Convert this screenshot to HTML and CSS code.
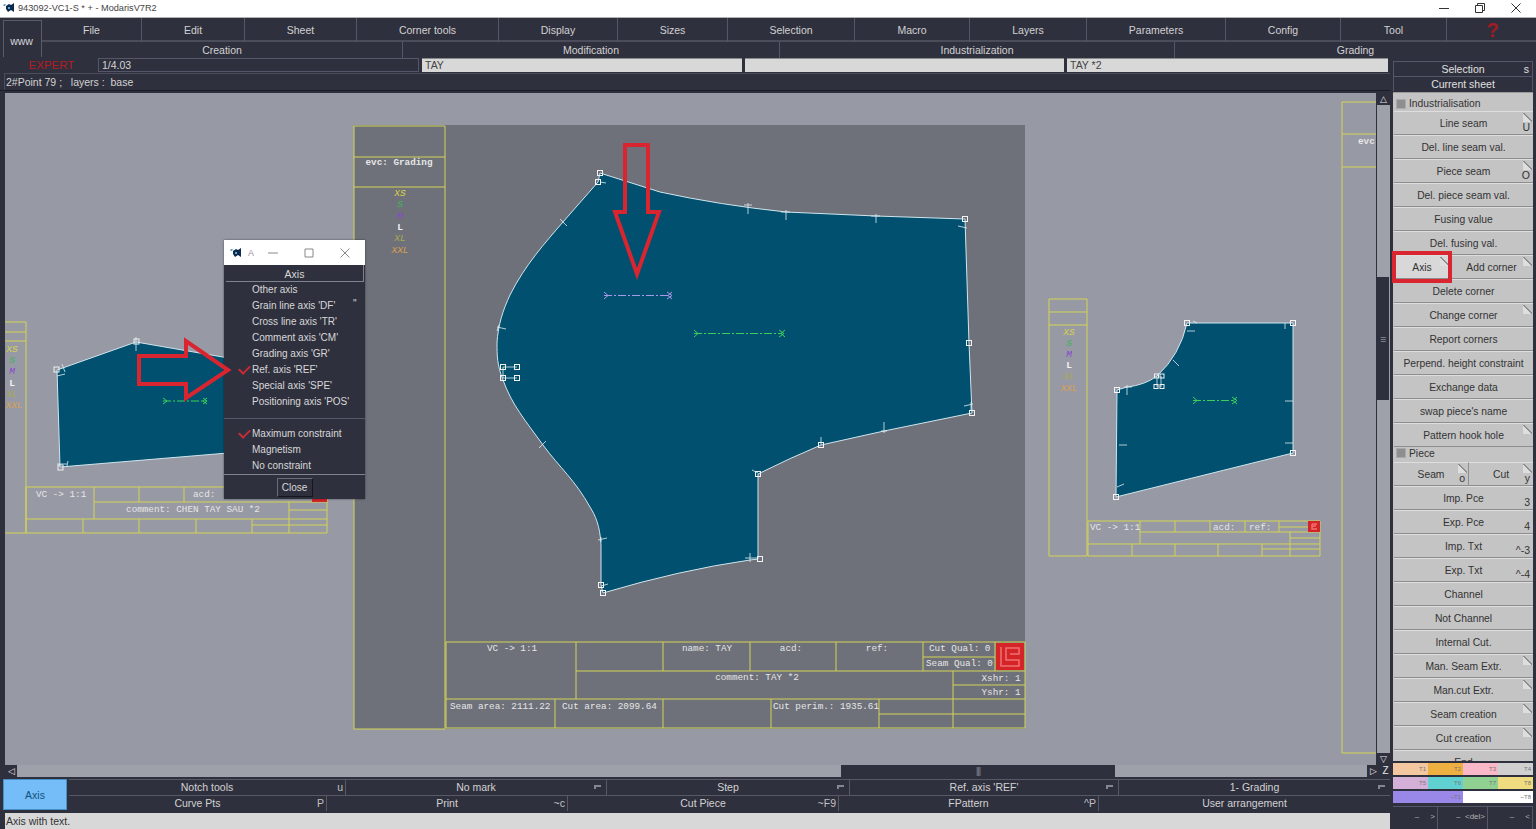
FILE: index.html
```html
<!DOCTYPE html>
<html lang="en">
<head>
<meta charset="utf-8">
<title>Modaris V7R2</title>
<link rel="stylesheet" href="styles.css">
</head>
<body>
<header class="titlebar">
  <svg class="app-icon" viewBox="0 0 12 10"><path d="M0 2l2-1 1 1-2 1z" fill="#3a7fb0"/><path d="M3 3l3-2 2 1 3-2v9l-3-2-3 2-2-3z" fill="#0e2a4a"/><path d="M5 4h2v2H5z" fill="#5aa8d8"/></svg>
  <span class="title-text">943092-VC1-S * + - ModarisV7R2</span>
  <div class="win-controls">
    <svg viewBox="0 0 10 10"><path d="M0 5.5h10" stroke="#333" fill="none"/></svg>
    <svg viewBox="0 0 10 10"><path d="M.5 2.5h7v7h-7zM2.5 2.5v-2h7v7h-2" stroke="#333" fill="none"/></svg>
    <svg viewBox="0 0 10 10"><path d="M.5.5l9 9M9.5.5l-9 9" stroke="#333" fill="none"/></svg>
  </div>
</header>

<section class="menus">
  <div class="www">www</div>
  <nav class="menu-a">
    <div>File</div><div>Edit</div><div>Sheet</div><div>Corner tools</div><div>Display</div><div>Sizes</div><div>Selection</div><div>Macro</div><div>Layers</div><div>Parameters</div><div>Config</div><div>Tool</div><div class="help">?</div>
  </nav>
  <nav class="menu-b">
    <div>Creation</div><div>Modification</div><div>Industrialization</div><div>Grading</div>
  </nav>
</section>

<main class="app">
  <div class="left">
    <div class="info">
      <div class="expert">EXPERT</div>
      <div class="field dark">1/4.03</div>
      <div class="field">TAY</div>
      <div class="field"></div>
      <div class="field">TAY *2</div>
    </div>
    <div class="status">2#Point 79 ;&nbsp;&nbsp; layers :&nbsp; base</div>
    <div class="work">
      <div class="canvas">
        <svg class="sheet" viewBox="5 93 1372 672" width="1372" height="672">
          <rect class="s-bg" x="354" y="125" width="671" height="604"/>

          <!-- far right sheet edge -->
          <path class="y" d="M1377 102H1342V753H1377M1342 134H1377M1342 167H1377"/>
          <text class="m b" x="1358" y="144">evc</text>

          <!-- left piece -->
          <path class="y" d="M5 322H26V533H5M5 332H26M5 341H26"/>
          <g class="sizes" text-anchor="middle">
            <text class="c1" x="12" y="352">XS</text><text class="c2" x="12" y="363">S</text><text class="c3" x="12" y="374">M</text><text class="c4" x="12" y="386">L</text><text class="c5" x="12" y="397">XL</text><text class="c6" x="14" y="408">XXL</text>
          </g>
          <path class="pc" d="M57 370L136 342L240 360V452L60 467Z"/>
          <path class="tk" d="M57 376l8-2M62 364l3 8M136 337v14M68 461l-1 5M57 464h10"/>
          <rect class="cn" x="54" y="367" width="5" height="5"/><rect class="cn" x="134" y="339" width="5" height="5"/><rect class="cn" x="58" y="465" width="5" height="5"/>
          <path class="ax-g" d="M163 401H206"/>
          <path class="ax-end-g" d="M163 398l4 3-4 3M203 398l4 3-4 3M207 398l-4 3 4 3"/>
          <path class="y" d="M26 487H327V533H26ZM94 487V519M139 487V502M184 487V502M94 502H327M26 519H327M83 519V533M139 519V533M196 519V533M252 519V533M289 502V533M289 510H327M252 525H327"/>
          <rect class="logo" x="312" y="497" width="15" height="5"/>
          <text class="m" x="36" y="497">VC -&gt; 1:1</text>
          <text class="m" x="193" y="497">acd:</text>
          <text class="m" x="193" y="512" text-anchor="middle">comment: CHEN TAY SAU *2</text>

          <!-- main sheet -->
          <path class="y" d="M354 126H445V729H354ZM354 157H445M354 187H445"/>
          <text class="m b" x="399" y="165" text-anchor="middle">evc: Grading</text>
          <g class="sizes" text-anchor="middle">
            <text class="c1" x="400" y="196">XS</text><text class="c2" x="400" y="207">S</text><text class="c3" x="400" y="219">M</text><text class="c4" x="400" y="230">L</text><text class="c5" x="400" y="241">XL</text><text class="c6" x="400" y="253">XXL</text>
          </g>
          <path class="pc" d="M600 173L660 192Q720 205 786 212L876 216L965 219L969 343L972 413L884 431L821 445Q790 458 758 474V559L750 560Q680 570 603 593L601 585V545C600 525 595 515 590 507C575 480 560 468 543 445C525 420 512 405 503 380C497 365 497 355 497 343C498 325 503 310 510 295C525 265 545 243 563 222L598 182Z"/>
          <path class="tk" d="M560 219l7 7M748 203v11M744 205h8M786 210v10M781 212h9M876 214v9M871 216h9M958 226l9 2M497 327l9 2M499 325l-2 6M546 441l-7 7M598 540l9-2M601 537v5M884 422v11M881 431h6M821 437v8M752 470l6 3M750 553v9M745 558h12M964 406l9-2M971 402v8M601 586l7-2M600 182l6 1"/>
          <path class="tk" d="M503 367H517M503 378H517M503 367V378"/>
          <rect class="cn" x="597.500" y="170.500" width="5" height="5"/><rect class="cn" x="595.500" y="179.500" width="5" height="5"/><rect class="cn" x="962.500" y="216.500" width="5" height="5"/><rect class="cn" x="966.500" y="340.500" width="5" height="5"/><rect class="cn" x="969.500" y="410.500" width="5" height="5"/><rect class="cn" x="818.500" y="442.500" width="5" height="5"/><rect class="cn" x="755.500" y="471.500" width="5" height="5"/><rect class="cn" x="757.500" y="556.500" width="5" height="5"/><rect class="cn" x="598.500" y="582.500" width="5" height="5"/><rect class="cn" x="600.500" y="590.500" width="5" height="5"/><rect class="cn" x="500.500" y="364.500" width="5" height="5"/><rect class="cn" x="514.500" y="364.500" width="5" height="5"/><rect class="cn" x="500.500" y="375.500" width="5" height="5"/><rect class="cn" x="514.500" y="375.500" width="5" height="5"/>
          <path class="ax-p" d="M604 295.500H670"/>
          <path class="ax-end-p" d="M604 292l4 3.500-4 3.500M667 292l5 3.500-5 3.500M672 292l-4 3.500 4 3.500"/>
          <path class="ax-g" d="M694 333.500H782"/>
          <path class="ax-end-g" d="M694 330l4 3.500-4 3.500M779 330l5 3.500-5 3.500M785 330l-4 3.500 4 3.500"/>

          <path class="y" d="M446 642H1025V728H446ZM576 642V699M663 642V671M750 642V671M836 642V671M923 642V671M995 642V671M923 657H995M576 671H1025M446 699H1025M953 671V728M953 685H1025M879 714H1025M555 699V728M663 699V728M771 699V728M879 699V728"/>
          <rect class="logo" x="996" y="643" width="28" height="27"/>
          <path class="logo-l" d="M1001 647V666H1019V660H1006V648H1019V654H1010"/>
          <text class="m" x="512" y="651" text-anchor="middle">VC -&gt; 1:1</text>
          <text class="m" x="707" y="651" text-anchor="middle">name: TAY</text>
          <text class="m" x="791" y="651" text-anchor="middle">acd:</text>
          <text class="m" x="877" y="651" text-anchor="middle">ref:</text>
          <text class="m" x="929" y="651">Cut Qual: 0</text>
          <text class="m" x="926" y="666">Seam Qual: 0</text>
          <text class="m" x="757" y="680" text-anchor="middle">comment: TAY *2</text>
          <text class="m" x="1001" y="681" text-anchor="middle">Xshr: 1</text>
          <text class="m" x="1001" y="695" text-anchor="middle">Yshr: 1</text>
          <text class="m" x="450" y="709">Seam area: 2111.22</text>
          <text class="m" x="562" y="709">Cut area: 2099.64</text>
          <text class="m" x="773" y="709">Cut perim.: 1935.61</text>

          <!-- right piece -->
          <path class="y" d="M1049 299H1087V556H1049ZM1049 312H1087M1049 325H1087"/>
          <g class="sizes" text-anchor="middle">
            <text class="c1" x="1069" y="335">XS</text><text class="c2" x="1069" y="346">S</text><text class="c3" x="1069" y="357">M</text><text class="c4" x="1069" y="368">L</text><text class="c5" x="1069" y="379">XL</text><text class="c6" x="1069" y="391">XXL</text>
          </g>
          <path class="pc" d="M1117 390L1127 387Q1145 385 1157 376Q1180 355 1187 323H1293V453L1116 497Z"/>
          <path class="tk" d="M1127 385v10M1124 387h8M1187 331h8M1197 323l-4-2M1173 360l6 6M1285 323v6M1119 445h8M1293 401h-8M1293 443h-8M1117 487l7-3"/>
          <path class="tk" d="M1157 376V387M1161 376V387"/>
          <rect class="cn" x="1114.500" y="387.500" width="5" height="5"/><rect class="cn" x="1184.500" y="320.500" width="5" height="5"/><rect class="cn" x="1290.500" y="320.500" width="5" height="5"/><rect class="cn" x="1290.500" y="450.500" width="5" height="5"/><rect class="cn" x="1113.500" y="494.500" width="5" height="5"/><rect class="cn" x="1154.500" y="374" width="4" height="4"/><rect class="cn" x="1160" y="374" width="4" height="4"/><rect class="cn" x="1154" y="384.500" width="4" height="4"/><rect class="cn" x="1160" y="384.500" width="4" height="4"/>
          <path class="ax-g" d="M1193 400.500H1235"/>
          <path class="ax-end-g" d="M1193 397l4 3.500-4 3.500M1232 397l5 3.500-5 3.500M1237 397l-4 3.500 4 3.500"/>
          <path class="y" d="M1088 521H1320V556H1088ZM1140 521V544M1175 521V532M1210 521V532M1245 521V532M1279 521V532M1140 532H1320M1088 544H1320M1132 544V556M1175 544V556M1218 544V556M1262 544V556M1290 532V556M1279 527H1320M1290 538H1320M1262 549H1320"/>
          <rect class="logo" x="1308" y="521" width="12" height="11"/>
          <path class="logo-l" d="M1312 524V529H1317M1312 526H1316M1312 524H1317"/>
          <text class="m" x="1090" y="530">VC -&gt; 1:1</text>
          <text class="m" x="1213" y="530">acd:</text>
          <text class="m" x="1249" y="530">ref:</text>
        </svg>
      </div>
      <div class="vscroll">
        <div class="sb-btn">△</div>
        <div class="track v"><div class="thumb v">≡</div></div>
        <div class="sb-btn">▽</div>
      </div>
    </div>
    <div class="hscroll">
      <div class="sb-btn">◁</div>
      <div class="track h"><div class="thumb h">|||</div></div>
      <div class="sb-btn">▷</div>
      <div class="sb-z">Z</div>
    </div>
    <div class="tools">
      <div class="axis-main">Axis</div>
      <div class="tool-rows">
        <div class="tool-row a">
          <div>Notch tools<b>u</b></div><div>No mark<i></i></div><div>Step<i></i></div><div>Ref. axis 'REF'<i></i></div><div>1- Grading<i></i></div>
        </div>
        <div class="tool-row c">
          <div>Curve Pts<b>P</b></div><div>Print<b>~c</b></div><div>Cut Piece<b>~F9</b></div><div>FPattern<b>^P</b></div><div>User arrangement</div>
        </div>
      </div>
    </div>
    <div class="hint">Axis with text.</div>
  </div>

  <aside class="side">
    <div class="side-h">Selection<b>s</b></div>
    <div class="side-h">Current sheet</div>
    <div class="panel">
      <div class="group"><span class="check"></span>Industrialisation</div>
      <div class="btn fold">Line seam<b>U</b></div>
      <div class="btn">Del. line seam val.</div>
      <div class="btn fold">Piece seam<b>O</b></div>
      <div class="btn">Del. piece seam val.</div>
      <div class="btn">Fusing value</div>
      <div class="btn">Del. fusing val.</div>
      <div class="pair axis-pair"><div class="btn fold on">Axis</div><div class="btn fold">Add corner</div></div>
      <div class="btn">Delete corner</div>
      <div class="btn fold">Change corner</div>
      <div class="btn">Report corners</div>
      <div class="btn">Perpend. height constraint</div>
      <div class="btn">Exchange data</div>
      <div class="btn">swap piece's name</div>
      <div class="btn fold">Pattern hook hole</div>
      <div class="group second"><span class="check"></span>Piece</div>
      <div class="pair seam-pair"><div class="btn fold">Seam<b>o</b></div><div class="btn fold">Cut<b>y</b></div></div>
      <div class="btn">Imp. Pce<b>3</b></div>
      <div class="btn">Exp. Pce<b>4</b></div>
      <div class="btn">Imp. Txt<b>^-3</b></div>
      <div class="btn">Exp. Txt<b>^-4</b></div>
      <div class="btn">Channel</div>
      <div class="btn">Not Channel</div>
      <div class="btn">Internal Cut.</div>
      <div class="btn fold">Man. Seam Extr.</div>
      <div class="btn fold">Man.cut Extr.</div>
      <div class="btn fold">Seam creation</div>
      <div class="btn fold">Cut creation</div>
      <div class="btn">End</div>
    </div>
    <div class="swatches">
      <div class="t1">T1</div><div class="t2">T2</div><div class="t3">T3</div><div class="t4">T4</div>
    </div>
    <div class="swatches">
      <div class="t5">T5</div><div class="t6">T6</div><div class="t7">T7</div><div class="t8">T8</div>
    </div>
    <div class="swatches two">
      <div class="t9">~T1</div><div class="t10">~T8</div>
    </div>
    <div class="keys">
      <div>–&nbsp;&nbsp;&nbsp;&nbsp;&nbsp;&gt;</div><div>–&nbsp;&nbsp;&lt;del&gt;</div><div>–&nbsp;&nbsp;&nbsp;&nbsp;&nbsp;&lt;</div>
    </div>
  </aside>
</main>

<div class="popup">
  <div class="pop-title">
    <svg class="app-icon" viewBox="0 0 12 10"><path d="M0 2l2-1 1 1-2 1z" fill="#3a7fb0"/><path d="M3 3l3-2 2 1 3-2v9l-3-2-3 2-2-3z" fill="#0e2a4a"/><path d="M5 4h2v2H5z" fill="#5aa8d8"/></svg>
    <span class="pop-a">A</span>
    <svg class="pop-c" viewBox="0 0 10 10"><path d="M0 5h10" stroke="#888" fill="none"/></svg>
    <svg class="pop-c" viewBox="0 0 10 10"><path d="M1 1h8v8H1z" stroke="#888" fill="none"/></svg>
    <svg class="pop-c" viewBox="0 0 10 10"><path d="M.5.5l9 9M9.5.5l-9 9" stroke="#888" fill="none"/></svg>
  </div>
  <div class="pop-head">Axis</div>
  <div class="pop-list">
    <div class="pop-item">Other axis</div>
    <div class="pop-item">Grain line axis 'DF'<b>"</b></div>
    <div class="pop-item">Cross line axis 'TR'</div>
    <div class="pop-item">Comment axis 'CM'</div>
    <div class="pop-item">Grading axis 'GR'</div>
    <div class="pop-item chk">Ref. axis 'REF'</div>
    <div class="pop-item">Special axis 'SPE'</div>
    <div class="pop-item">Positioning axis 'POS'</div>
  </div>
  <div class="pop-list sep">
    <div class="pop-item chk">Maximum constraint</div>
    <div class="pop-item">Magnetism</div>
    <div class="pop-item">No constraint</div>
  </div>
  <div class="pop-foot"><div class="pop-close">Close</div></div>
</div>

<svg class="marks" viewBox="0 0 1536 829" width="1536" height="829">
  <path d="M625 145H648V212H659L637 274L615 212H625Z"/>
  <path d="M139 356H186V341L228 370L186 398V384H139Z"/>
  <rect x="1394" y="253" width="56" height="28"/>
</svg>
</body>
</html>
```

FILE: styles.css
```css
* { box-sizing: border-box; }
html, body { margin: 0; height: 829px; overflow: hidden; }
body {
  position: relative;
  width: 1536px;
  background: #2f303e;
  color: #d2d2d2;
  font: 10.5px "Liberation Sans", Arial, sans-serif;
  display: flex;
  flex-direction: column;
}
b, i { font-weight: normal; font-style: normal; }

/* title bar */
.titlebar {
  height: 18px;
  background: #fff;
  color: #444;
  display: flex;
  align-items: center;
  padding: 0 0 1px 3px;
  flex: none;
  border-bottom: 1px solid #b0b0b0;
  font-size: 9.2px;
}
.app-icon { width: 12px; height: 10px; flex: none; }
.title-text { margin-left: 3px; }
.win-controls { margin-left: auto; display: flex; gap: 26px; padding-right: 15px; }
.win-controls svg { width: 10px; height: 10px; }

/* menus */
.menus {
  flex: none;
  height: 39px;
  display: grid;
  grid-template-columns: 3px 39px 1fr;
  grid-template-rows: 24px 15px;
  background: #2f303e;
}
.www {
  grid-column: 2;
  grid-row: 1 / 3;
  margin-top: 2px;
  border: 1px solid #5a5b68;
  border-bottom: 0;
  display: flex;
  align-items: center;
  justify-content: center;
  padding: 3px 2px 0 0;
  color: #d8d8d8;
}
.menu-a, .menu-b { grid-column: 3; display: grid; text-align: center; }
.menu-a {
  grid-row: 1;
  grid-template-columns: 100px 103px 112px 142px 119px 110px 127px 115px 117px 139px 115px 106px 1fr;
  border-bottom: 2px solid #4c4d5a;
}
.menu-a > div { border-right: 1px solid #55566a; line-height: 24px; }
.menu-a > div:last-child { border-right: 0; }
.help { color: #a01c22; font: bold 20px/24px "Liberation Sans", sans-serif; padding-left: 2px; }
.menu-b { grid-row: 2; grid-template-columns: 361px 377px 395px 1fr; }
.menu-b > div { border-right: 1px solid #55566a; line-height: 16px; }
.menu-b > div:last-child { border-right: 0; }

/* application body */
.app { flex: 1; display: grid; grid-template-columns: 1390px 146px; min-height: 0; }
.left { display: flex; flex-direction: column; min-width: 0; }
.info {
  height: 16px;
  flex: none;
  display: grid;
  grid-template-columns: 95px 321px 320px 319px 321px;
  gap: 3px;
  padding-top: 1px;
}
.expert { color: #b51c22; text-align: center; padding-left: 8px; line-height: 15px; font-size: 11.5px; }
.field {
  height: 14px;
  background: #d8d8d8;
  color: #444;
  padding-left: 3px;
  line-height: 13px;
  border-top: 1px solid #8a8a8a;
}
.field.dark {
  background: #2f303e;
  color: #d6d6d6;
  border: 1px solid #55566a;
}
.status {
  height: 17px;
  flex: none;
  margin: 0 0 0 4px;
  padding-left: 1px;
  line-height: 16px;
  border-top: 1px solid #4c4d5a;
  border-left: 1px solid #4c4d5a;
}
.work { flex: none; height: 675px; display: flex; padding-left: 5px; padding-top: 2px; border-top: 1px solid #1c1c26; }
.canvas { width: 1372px; height: 672px; background: #9799a4; overflow: hidden; }
.sheet { display: block; }
.s-bg { fill: #6e717a; }
.y { fill: none; stroke: #d4d455; stroke-width: 1; }
.pc { fill: #02506f; stroke: #cfe6ee; stroke-width: 1; }
.tk { fill: none; stroke: #dfeef2; stroke-width: .8; }
.cn { fill: none; stroke: #f2f2f2; stroke-width: 1; }
.ax-g { fill: none; stroke: #38d05a; stroke-width: 1; stroke-dasharray: 8 2 2 2; }
.ax-end-g { fill: none; stroke: #38d05a; stroke-width: 1; }
.ax-p { fill: none; stroke: #a99ae8; stroke-width: 1; stroke-dasharray: 8 2 2 2; }
.ax-end-p { fill: none; stroke: #a99ae8; stroke-width: 1; }
.logo { fill: #d52428; }
.logo-l { fill: none; stroke: #f07070; stroke-width: 1.5; }
.m { font: 9.3px "Liberation Mono", monospace; fill: #e6e6e6; }
.m.b { font-weight: bold; }
.sizes text { font: italic 9.5px "Liberation Mono", monospace; }
.c1 { fill: #d6d24e; }
.c2 { fill: #42b45a; }
.c3 { fill: #8a46d0; }
.sizes .c4 { fill: #f2f2f2; font-style: normal; font-weight: bold; }
.c5 { fill: #a8ac50; }
.c6 { fill: #dca050; }

/* scrollbars */
.vscroll { width: 13px; margin-left: 1px; display: flex; flex-direction: column; background: #2f303e; }
.sb-btn { width: 12px; height: 12px; color: #e8e8e8; font-size: 9px; line-height: 12px; text-align: center; flex: none; background: #2f303e; }
.track { background: #9ea0aa; flex: 1; display: flex; }
.track.v { flex-direction: column; padding-top: 172px; padding-right: 1px; }
.thumb { background: #2f303e; color: #8c8e9a; display: flex; align-items: center; justify-content: center; }
.thumb.v { height: 123px; }
.hscroll { height: 12px; flex: none; display: flex; padding: 0 0 0 5px; align-items: stretch; }
.track.h { width: 1350px; flex: none; padding-left: 824px; }
.thumb.h { width: 274px; font-size: 9px; letter-spacing: -1px; }
.sb-z { width: 12px; margin-left: 2px; text-align: center; color: #e8e8e8; font-size: 10px; line-height: 12px; }

/* bottom tools */
.tools { height: 33px; flex: none; display: flex; padding: 2px 0 0 3px; gap: 2px; }
.axis-main {
  width: 64px;
  height: 31px;
  background: #74bdf8;
  color: #14507c;
  display: flex;
  align-items: center;
  justify-content: center;
  border: 1px solid #4a90c8;
}
.tool-rows { flex: 1; display: flex; flex-direction: column; }
.tool-row { height: 16px; display: grid; text-align: center; line-height: 15px; border-top: 1px solid #585966; }
.tool-row.a { grid-template-columns: 277px 261px 243px 269px 1fr; }
.tool-row.c { grid-template-columns: 258px 241px 271px 260px 1fr; }
.tool-row > div { position: relative; border-right: 1px solid #585966; }
.tool-row > div:last-child { border-right: 0; }
.tool-row b { position: absolute; right: 2px; top: 0; color: #c0c0c0; }
.tool-row i {
  position: absolute;
  right: 5px;
  top: 5px;
  width: 7px;
  height: 4px;
  border-top: 2px solid #85868f;
  border-left: 2px solid #85868f;
}
.hint {
  flex: 1;
  margin: 3px 0 0 5px;
  background: #d8d8d8;
  color: #333;
  padding-left: 1px;
  line-height: 17px;
}

/* right side panel */
.side { display: flex; flex-direction: column; padding: 4px 3px 0 3px; min-height: 0; font-size: 10.3px; }
.side-h {
  height: 15px;
  flex: none;
  position: relative;
  text-align: center;
  line-height: 15px;
  border: 1px solid #55566a;
  border-bottom: 0;
  color: #e0e0e0;
  font-size: 10.5px;
}
.side-h b { position: absolute; right: 3px; top: 0; }
.panel {
  height: 669px;
  flex: none;
  margin-top: 1px;
  border-top: 1px solid #9a9a9a;
  background: #c4c4c4;
  color: #333;
  overflow: hidden;
  padding-left: 1px;
}
.group { height: 18px; display: flex; align-items: center; gap: 3px; padding: 3px 0 0 2px; }
.group.second { height: 19px; margin-top: -4px; padding-top: 1px; }
.check { width: 10px; height: 10px; background: #8e8e8e; border: 1px solid #aaa; }
.btn {
  position: relative;
  height: 24px;
  text-align: center;
  line-height: 23px;
  border-top: 1px solid #dedede;
  border-bottom: 1px solid #8e8e8e;
  flex: none;
}
.btn b { position: absolute; right: 3px; bottom: 0; line-height: 13px; font-size: 10.5px; }
.fold::after {
  content: "";
  position: absolute;
  right: 1px;
  top: 1px;
  width: 9px;
  height: 9px;
  background: linear-gradient(to top right, #dedede 0 47%, #8e8e8e 47% 56%, transparent 56%);
}
.pair { display: flex; }
.axis-pair .btn:first-child { width: 56px; }
.axis-pair .btn:last-child { flex: 1; }
.seam-pair .btn:first-child { width: 75px; border-right: 1px solid #8e8e8e; }
.seam-pair .btn:last-child { flex: 1; }
.btn.on { background: #d8d8d8; }

.swatches { height: 12px; margin-top: 2px; flex: none; display: grid; grid-template-columns: repeat(4, 1fr); color: #777; font-size: 6px; line-height: 12px; text-align: right; }
.swatches > div { padding-right: 2px; }
.swatches.two { grid-template-columns: 1fr 1fr; }
.t1 { background: #f3c8a0; } .t2 { background: #eeb040; } .t3 { background: #f8b8c8; } .t4 { background: #d0d0d0; }
.t5 { background: #d4b0d8; } .t6 { background: #60d0d0; } .t7 { background: #90d090; } .t8 { background: #f0dc80; }
.t9 { background: #9a88e8; } .t10 { background: #fff; }
.keys { flex: 1; margin-top: 3px; display: grid; grid-template-columns: 45px 50px 1fr; border-top: 1px solid #55566a; text-align: right; color: #b0b0b0; font-size: 8px; line-height: 20px; }
.keys > div { border-right: 1px solid #55566a; padding-right: 2px; }

/* floating dialog */
.popup {
  position: absolute;
  left: 224px;
  top: 240px;
  width: 141px;
  height: 259px;
  background: #2f303e;
  color: #d8d8d8;
  font-size: 10px;
  display: flex;
  flex-direction: column;
  box-shadow: 0 0 2px rgba(0,0,0,.5);
}
.pop-title { height: 25px; background: #fff; display: flex; align-items: center; padding-left: 6px; flex: none; }
.pop-a { color: #999; font-size: 9px; margin-left: 6px; }
.pop-c { width: 10px; height: 10px; margin-left: 26px; }
.pop-a + .pop-c { margin-left: 14px; }
.pop-head { height: 17px; margin: 0 1px 0 2px; flex: none; text-align: center; line-height: 19px; font-size: 10.5px; border: 1px solid #808290; border-width: 0 1px 1px 0; }
.pop-list { flex: none; }
.pop-item { height: 16px; line-height: 16px; padding-left: 28px; position: relative; }
.pop-item b { position: absolute; left: 129px; top: -2px; }
.chk::before {
  content: "";
  position: absolute;
  left: 15px;
  top: 3px;
  width: 9px;
  height: 5px;
  border-left: 2px solid #c92c34;
  border-bottom: 2px solid #c92c34;
  transform: rotate(-45deg);
}
.pop-list.sep { margin-top: 8px; border-top: 1px solid #55566a; padding-top: 7px; }
.pop-foot { margin-top: 0; border-top: 1px solid #808290; flex: 1; display: flex; justify-content: center; padding-top: 3px; }
.pop-close { width: 36px; height: 19px; line-height: 17px; text-align: center; border: 1px solid #15161e; border-top-color: #6a6b78; border-left-color: #6a6b78; }

/* red annotations painted over the screenshot */
.marks { position: absolute; left: 0; top: 0; pointer-events: none; }
.marks path { fill: none; stroke: #d9252f; stroke-width: 4; }
.marks rect { fill: none; stroke: #d9252f; stroke-width: 4; }
```
